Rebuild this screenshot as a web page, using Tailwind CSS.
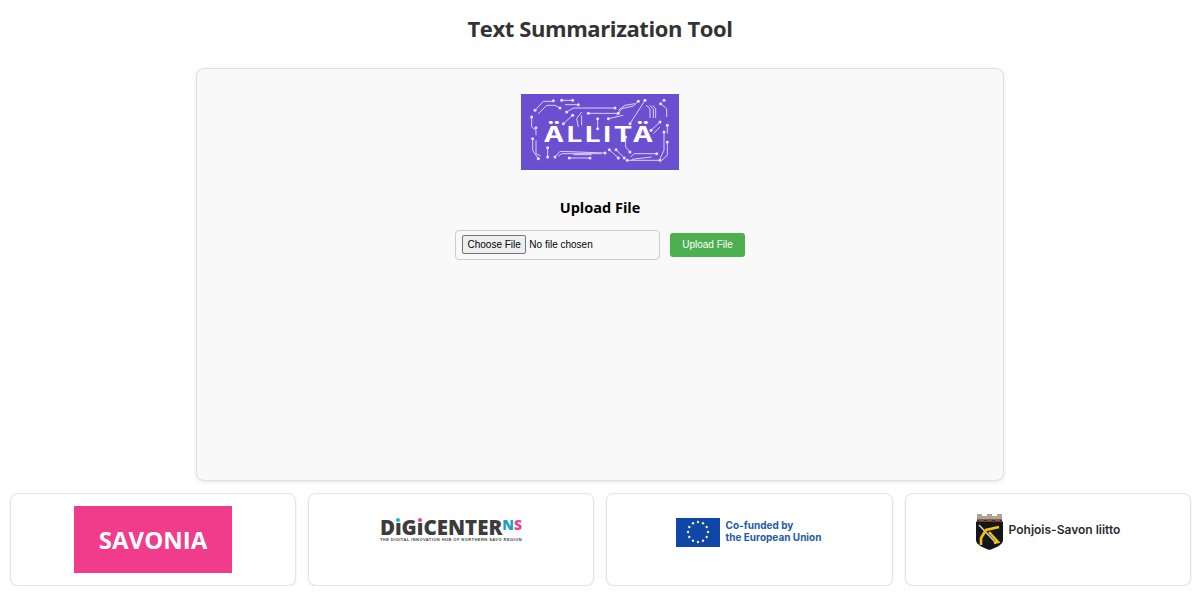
<!DOCTYPE html>
<html lang="en">
<head>
  <meta charset="UTF-8">
  <title>Text Summarization Tool</title>
  <script src="https://cdn.jsdelivr.net/npm/@tailwindcss/browser@4"></script>
</head>
<body class="bg-white font-['Liberation_Sans',sans-serif]">
  <h1 class="h-[68px] pt-[12px] text-center text-[22px] leading-[32px] tracking-[-0.4px] font-bold text-[#333] font-['Open_Sans',sans-serif]">Text Summarization Tool</h1>

  <main class="mx-auto w-[808px] h-[413px] bg-[#f9f9f9] border border-[#e0e0e0] rounded-lg shadow-[0_1px_4px_rgba(0,0,0,0.1)] flex flex-col items-center pt-[25px]">
    <!-- allita logo -->
    <div class="relative w-[158px] h-[76px] bg-[#6a4fd0] flex items-center justify-center">
      <svg class="absolute inset-0" width="158" height="76" viewBox="33 27 474 226" fill="none" stroke="#d9d3f5" stroke-width="3">
        <path d="M75 75L100 48H130M85 85L110 60H135L150 68M155 45H188M165 58H205M170 80L190 68H315M235 84H325M295 100L340 90M160 115L188 90M205 125L200 100L215 80M215 120V90M263 100V130M320 90L335 70L370 62L385 48M325 75L345 60L375 55M360 115L405 45M408 60L420 70V98M418 60L430 70V98M428 60L437 70V98M452 55L470 70V95M423 135L450 110M430 145L450 125M65 95V125L78 135V150M68 160V195L85 220M78 165V205L92 212M113 187V215M135 215L150 198L285 203M145 212L155 205H275M190 208H245M178 218H240M298 193L325 218M318 193L343 218M347 155V185L360 200M362 215L372 205H440M365 222L425 215M352 225H450M472 120V145M462 140V195L450 220M472 170V210L455 225"/>
        <g fill="#e6e2fa" stroke="none">
          <circle cx="75" cy="75" r="4.5"/><circle cx="130" cy="46" r="4.5"/><circle cx="150" cy="68" r="4.5"/><circle cx="155" cy="45" r="4.5"/><circle cx="188" cy="45" r="4.5"/><circle cx="205" cy="58" r="4.5"/><circle cx="170" cy="80" r="4.5"/><circle cx="315" cy="68" r="4.5"/><circle cx="235" cy="84" r="4.5"/><circle cx="325" cy="84" r="4.5"/><circle cx="295" cy="100" r="4.5"/><circle cx="188" cy="90" r="4.5"/><circle cx="160" cy="115" r="4.5"/><circle cx="263" cy="100" r="4.5"/><circle cx="263" cy="130" r="4.5"/><circle cx="385" cy="48" r="4.5"/><circle cx="405" cy="45" r="4.5"/><circle cx="360" cy="115" r="4.5"/><circle cx="462" cy="45" r="4.5"/><circle cx="452" cy="55" r="4.5"/><circle cx="65" cy="95" r="4.5"/><circle cx="78" cy="127" r="4.5"/><circle cx="68" cy="160" r="4.5"/><circle cx="85" cy="220" r="4.5"/><circle cx="113" cy="187" r="4.5"/><circle cx="113" cy="215" r="4.5"/><circle cx="135" cy="215" r="4.5"/><circle cx="285" cy="203" r="4.5"/><circle cx="178" cy="218" r="4.5"/><circle cx="240" cy="218" r="4.5"/><circle cx="298" cy="193" r="4.5"/><circle cx="325" cy="218" r="4.5"/><circle cx="318" cy="193" r="4.5"/><circle cx="343" cy="218" r="4.5"/><circle cx="347" cy="155" r="4.5"/><circle cx="360" cy="200" r="4.5"/><circle cx="440" cy="205" r="4.5"/><circle cx="352" cy="225" r="4.5"/><circle cx="450" cy="225" r="4.5"/><circle cx="472" cy="120" r="4.5"/><circle cx="472" cy="170" r="4.5"/><circle cx="462" cy="140" r="4.5"/><circle cx="450" cy="110" r="4.5"/><circle cx="423" cy="135" r="4.5"/>
        </g>
      </svg>
      <span class="relative mt-[4px] scale-x-[1.32] text-white text-[21px] leading-none font-bold tracking-[2px] font-['Inter',sans-serif]">ÄLLITÄ</span>
    </div>

    <h2 class="mt-[28px] text-[14.5px] leading-[20px] font-bold text-black font-['Open_Sans',sans-serif]">Upload File</h2>

    <form class="mt-[12px] flex items-center gap-[10px]">
      <input type="file" class="block w-[205px] h-[30px] bg-[#f9f9f9] border border-[#ccc] rounded-[4px] pl-[6px] pt-[4px] text-[10px] leading-[15px] text-black file:mr-[3px] file:bg-[#efefef] file:border file:border-solid file:border-[#767676] file:rounded-[2px] file:px-[4.5px] file:py-[1px] file:text-[10px] file:text-black">
      <button type="button" class="w-[75px] h-[24px] pb-[1px] bg-[#4caf50] text-white text-[10px] rounded-[3px] text-center">Upload File</button>
    </form>
  </main>

  <footer class="mt-[12px] pl-[10px] grid grid-cols-[286px_286px_287px_286px] gap-[12px]">
    <div class="h-[93px] bg-white border border-[#e4e4e4] rounded-lg shadow-[0_1px_3px_rgba(0,0,0,0.08)] flex items-start justify-center pt-[12px]">
      <div class="w-[158px] h-[67px] bg-[#f03c8a] flex items-center justify-center text-white text-[24px] font-bold font-['Open_Sans',sans-serif]">SAVONIA</div>
    </div>

    <div class="h-[93px] bg-white border border-[#e4e4e4] rounded-lg shadow-[0_1px_3px_rgba(0,0,0,0.08)] flex flex-col items-center pt-[24px]">
      <div class="flex items-start font-extrabold text-[#3c3c3e] font-['Open_Sans',sans-serif]">
        <span class="text-[20.5px] leading-[18px]">D<span class="relative inline-block">ı<span class="absolute top-0 left-1/2 -translate-x-1/2 size-[4px] rounded-full bg-[#1fb3d1]"></span></span>G<span class="relative inline-block">ı<span class="absolute top-0 left-1/2 -translate-x-1/2 size-[4px] rounded-full bg-[#ec3f8c]"></span></span>CENTER</span><span class="text-[14px] leading-[14px]"><span class="text-[#1f9fc0]">N</span><span class="text-[#ec3f8c]">S</span></span>
      </div>
      <div class="mt-[1px] text-[4px] leading-[5px] font-bold tracking-[0.45px] text-[#444] whitespace-nowrap">THE DIGITAL INNOVATION HUB OF NORTHERN SAVO REGION</div>
    </div>

    <div class="h-[93px] bg-white border border-[#e4e4e4] rounded-lg shadow-[0_1px_3px_rgba(0,0,0,0.08)] flex items-start justify-center pt-[24px] pr-[2px] gap-[6px]">
      <svg width="44" height="29" viewBox="0 0 44 29">
        <rect width="44" height="29" fill="#0f47a8"/>
        <g fill="#f5efb0"><circle cx="22" cy="4" r="1.2"/><circle cx="27" cy="5.3" r="1.2"/><circle cx="30.7" cy="9" r="1.2"/><circle cx="32" cy="14" r="1.2"/><circle cx="30.7" cy="19" r="1.2"/><circle cx="27" cy="22.7" r="1.2"/><circle cx="22" cy="24" r="1.2"/><circle cx="17" cy="22.7" r="1.2"/><circle cx="13.3" cy="19" r="1.2"/><circle cx="12" cy="14" r="1.2"/><circle cx="13.3" cy="9" r="1.2"/><circle cx="17" cy="5.3" r="1.2"/></g>
      </svg>
      <div class="text-[10px] leading-[12px] font-bold text-[#1b5ca8] font-['Inter',sans-serif] pt-[1px]">Co-funded by<br>the European Union</div>
    </div>

    <div class="h-[93px] bg-white border border-[#e4e4e4] rounded-lg shadow-[0_1px_3px_rgba(0,0,0,0.08)] flex items-start justify-center pt-[19px] gap-[6px]">
      <svg width="27" height="37" viewBox="0 0 27 37">
        <path d="M1 1H6V3H11V1H16V3H21V1H26V8H1Z" fill="#a8a592"/>
        <path d="M1 6.5H26V8.5H1Z" fill="#3a2c20"/>
        <path d="M3 6.5H8V8.5H3ZM11 6.5H16V8.5H11ZM19 6.5H24V8.5H19Z" fill="#c4392d"/>
        <path d="M0 8.5H27V27C27 32 19 35 13.5 37C8 35 0 32 0 27Z" fill="#14161a"/>
        <path d="M3 12L20 30" fill="none" stroke="#d8d8d8" stroke-width="1.4"/>
        <path d="M5 32V25L10 17L23 14M13 19L22 29L18 30" fill="none" stroke="#f4c20d" stroke-width="2.6"/>
      </svg>
      <span class="mt-[8px] text-[12px] leading-[18px] font-semibold text-[#2b2b2f] font-['Inter',sans-serif]">Pohjois-Savon liitto</span>
    </div>
  </footer>
</body>
</html>
